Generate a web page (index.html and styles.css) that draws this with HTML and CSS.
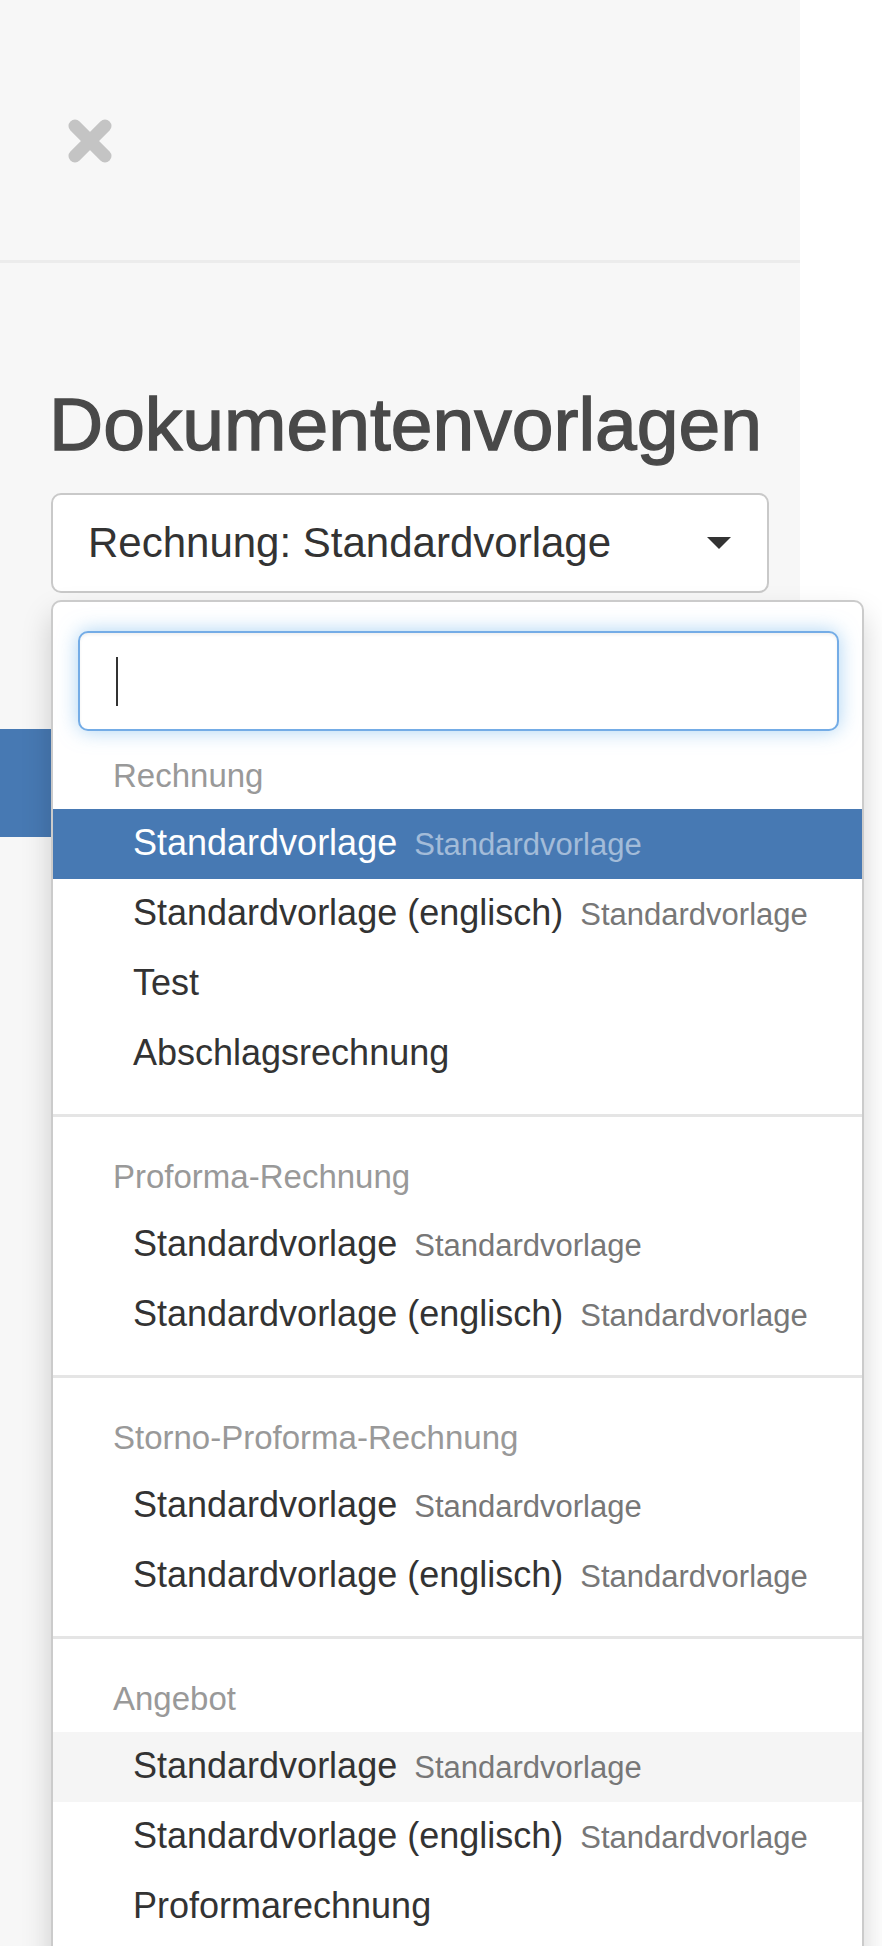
FILE: index.html
```html
<!DOCTYPE html>
<html lang="de">
<head>
<meta charset="utf-8">
<title>Dokumentenvorlagen</title>
<link rel="stylesheet" href="styles.css">
</head>
<body>
<div class="sidebar">
  <div class="sidebar-header">
    <button class="close-btn" aria-label="Schließen">
      <svg width="44" height="44" viewBox="0 0 44 44"><path d="M7 7 L37 37 M37 7 L7 37" stroke="#c4c4c4" stroke-width="13" stroke-linecap="round" fill="none"/></svg>
    </button>
  </div>
  <div class="sidebar-body">
    <h1 class="title">Dokumentenvorlagen</h1>
    <div class="bootstrap-select">
      <div class="select-toggle">
        <span class="select-value">Rechnung: Standardvorlage</span>
        <span class="caret"></span>
      </div>
      <div class="dropdown-menu">
        <div class="searchbox">
          <div class="search-input"><span class="cursor"></span></div>
        </div>
        <ul class="options">
          <li class="group-label">Rechnung</li>
          <li class="opt active"><span class="text">Standardvorlage<small>Standardvorlage</small></span></li>
          <li class="opt"><span class="text">Standardvorlage (englisch)<small>Standardvorlage</small></span></li>
          <li class="opt"><span class="text">Test</span></li>
          <li class="opt"><span class="text">Abschlagsrechnung</span></li>
          <li class="divider"></li>
          <li class="group-label">Proforma-Rechnung</li>
          <li class="opt"><span class="text">Standardvorlage<small>Standardvorlage</small></span></li>
          <li class="opt"><span class="text">Standardvorlage (englisch)<small>Standardvorlage</small></span></li>
          <li class="divider"></li>
          <li class="group-label">Storno-Proforma-Rechnung</li>
          <li class="opt"><span class="text">Standardvorlage<small>Standardvorlage</small></span></li>
          <li class="opt"><span class="text">Standardvorlage (englisch)<small>Standardvorlage</small></span></li>
          <li class="divider"></li>
          <li class="group-label">Angebot</li>
          <li class="opt hover"><span class="text">Standardvorlage<small>Standardvorlage</small></span></li>
          <li class="opt"><span class="text">Standardvorlage (englisch)<small>Standardvorlage</small></span></li>
          <li class="opt"><span class="text">Proformarechnung</span></li>
        </ul>
      </div>
    </div>
    <div class="primary-bar"></div>
  </div>
</div>
</body>
</html>
```
FILE: styles.css
```css
html, body {
  margin: 0;
  padding: 0;
  height: 1946px;
  overflow: hidden;
  background: #ffffff;
  font-family: "Liberation Sans", Arial, sans-serif;
}

.sidebar {
  width: 800px;
  height: 1946px;
  background: #f7f7f7;
}

.sidebar-header {
  height: 260px;
  border-bottom: 3px solid #ececec;
  box-sizing: content-box;
}

.close-btn {
  display: block;
  margin: 0;
  padding: 0;
  border: 0;
  background: none;
  position: relative;
  top: 119px;
  left: 68px;
  width: 44px;
  height: 44px;
}

.close-btn svg {
  display: block;
}

.sidebar-body {
  padding: 120px 32px 0 51px;
}

.title {
  margin: 0 0 0 -2px;
  font-size: 75px;
  line-height: 82px;
  font-weight: 400;
  color: #494949;
  -webkit-text-stroke: 1.4px #494949;
  letter-spacing: 0;
  white-space: nowrap;
}

.bootstrap-select {
  position: relative;
  margin-top: 28px;
  width: 718px;
}

.select-toggle {
  box-sizing: border-box;
  height: 100px;
  border: 2px solid #c9c9c9;
  border-radius: 10px;
  background: #ffffff;
  display: flex;
  align-items: center;
  justify-content: space-between;
  padding: 0 36px 0 35px;
}

.select-value {
  font-size: 42px;
  color: #333333;
}

.caret {
  width: 0;
  height: 0;
  border-top: 12px solid #333333;
  border-left: 12px solid transparent;
  border-right: 12px solid transparent;
}

.dropdown-menu {
  position: absolute;
  top: calc(100% + 7px);
  left: 0;
  width: 813px;
  box-sizing: border-box;
  background: #ffffff;
  border: 2px solid #cbcbcb;
  border-radius: 10px;
  box-shadow: 0 15px 30px rgba(0, 0, 0, 0.175);
  z-index: 10;
}

.searchbox {
  padding: 29px 23px 11px 25px;
}

.search-input {
  box-sizing: border-box;
  height: 100px;
  border: 2px solid #74ace6;
  border-radius: 10px;
  background: #ffffff;
  box-shadow: inset 0 2px 3px rgba(0, 0, 0, 0.06), 0 0 20px rgba(102, 175, 233, 0.55);
  padding: 24px 0 0 36px;
}

.cursor {
  display: block;
  width: 2px;
  height: 49px;
  background: #333333;
}

.options {
  list-style: none;
  margin: 0;
  padding: 0 0 80px;
}

.group-label {
  height: 67px;
  line-height: 67px;
  font-size: 33px;
  color: #999999;
  padding-left: 60px;
  white-space: nowrap;
}

.opt {
  height: 70px;
  line-height: 67px;
  font-size: 36px;
  color: #333333;
  padding-left: 80px;
  white-space: nowrap;
}

.opt small {
  font-size: 31px;
  padding-left: 0.55em;
  color: #777777;
}

.opt.active {
  background: #4779b3;
  color: #ffffff;
}

.opt.active small {
  color: rgba(255, 255, 255, 0.5);
}

.opt.hover {
  background: #f5f5f5;
}

.divider {
  height: 3px;
  margin: 25px 0 26px;
  background: #e5e5e5;
}

.primary-bar {
  margin: 136px 0 0 -51px;
  width: 819px;
  height: 108px;
  background: #4779b3;
}
```
